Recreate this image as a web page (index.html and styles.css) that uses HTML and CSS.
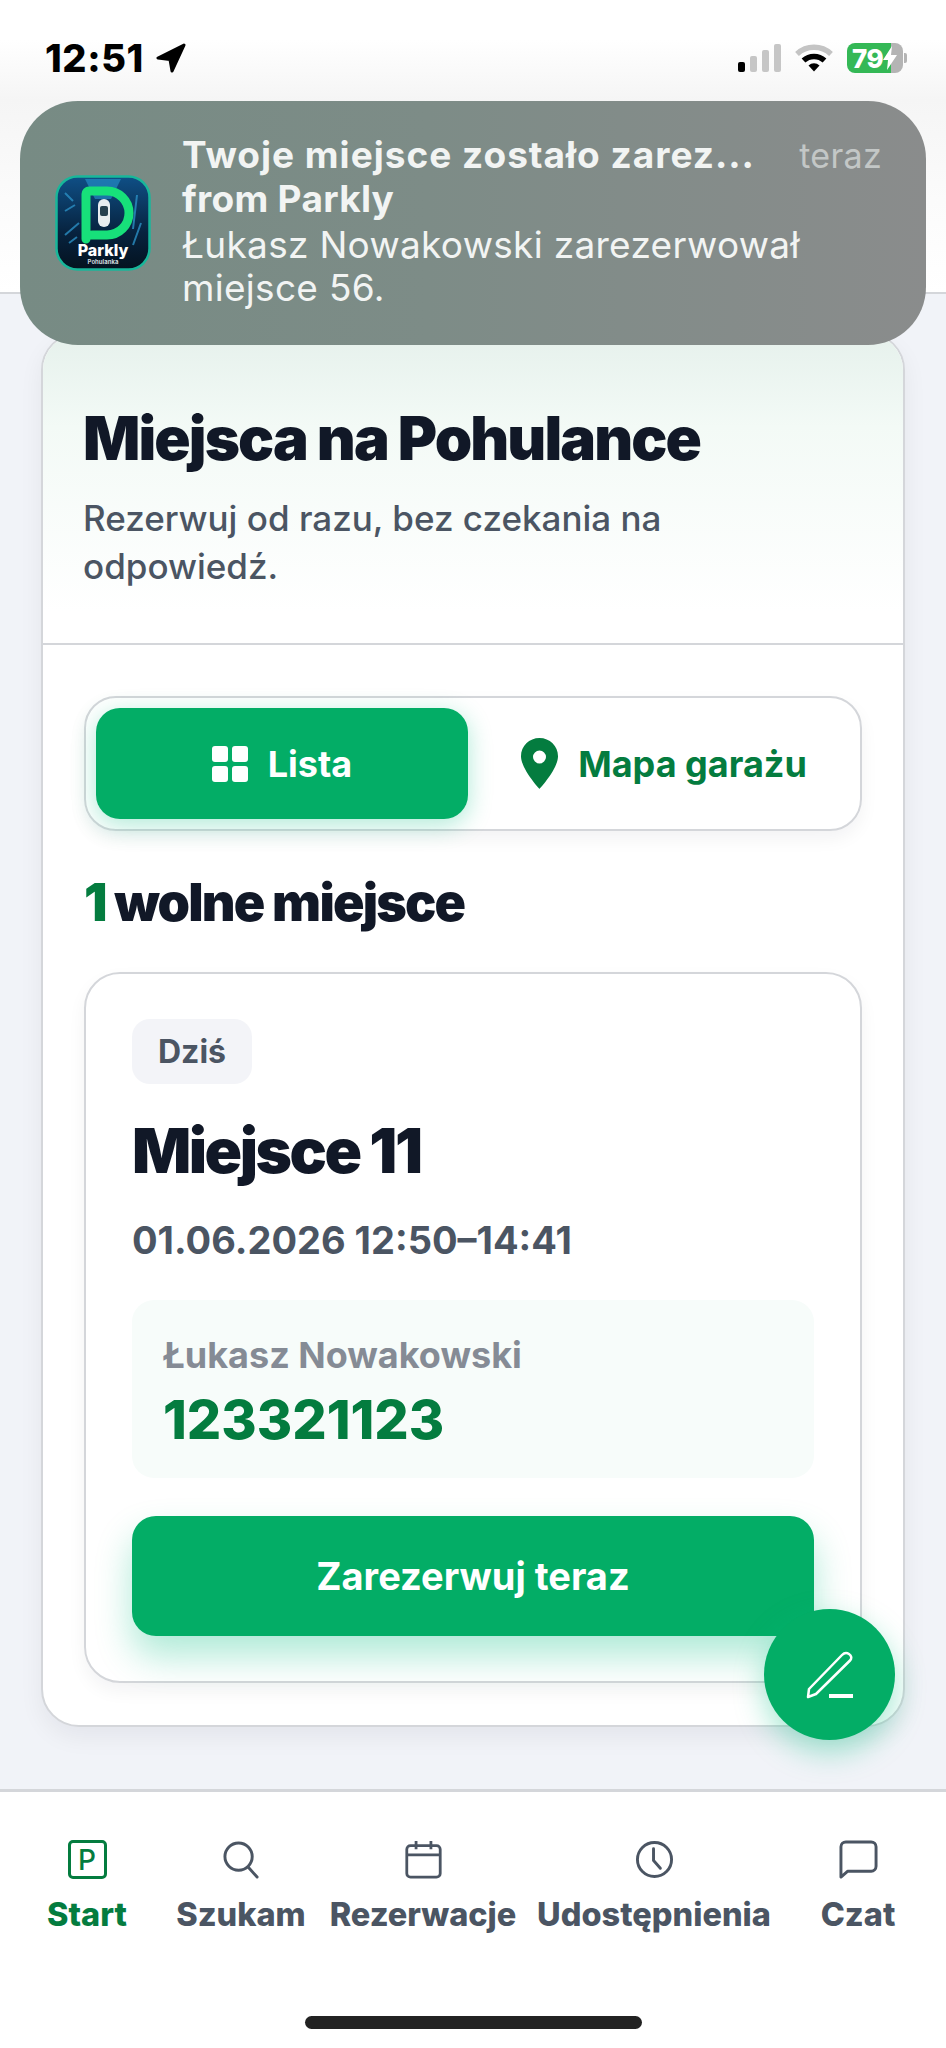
FILE: index.html
```html
<!DOCTYPE html>
<html lang="pl">
<head>
    <meta charset="UTF-8">
    <meta name="viewport" content="width=device-width, initial-scale=1.0">
    <title>Parkly</title>
    <link rel="stylesheet" href="styles.css">
</head>
<body>
    <div class="app">
        <header class="topbar">
            <div class="status">
                <div class="status-left">
                    <span class="clock">12:51</span>
                    <svg class="arrow" viewBox="0 0 30 30"><path d="M28 2 2 15l12 1.500L16 28z" fill="#000" stroke="#000" stroke-width="3" stroke-linejoin="round"/></svg>
                </div>
                <div class="status-right">
                    <div class="signal">
                        <span class="bar bar-1 on"></span>
                        <span class="bar bar-2"></span>
                        <span class="bar bar-3"></span>
                        <span class="bar bar-4"></span>
                    </div>
                    <svg class="wifi" viewBox="0 0 38 28">
                        <path d="M2 10a25 25 0 0 1 34 0" fill="none" stroke="#c4c4c4" stroke-width="5.5"/>
                        <path d="M8.5 16.5a15.500 15.500 0 0 1 21 0" fill="none" stroke="#000" stroke-width="5.500"/>
                        <path d="M13.500 21.500a8 8 0 0 1 11 0L19 27.500z" fill="#000"/>
                    </svg>
                    <div class="battery">
                        <div class="battery-body">
                            <span class="battery-level">79</span>
                            <svg class="bolt" viewBox="0 0 14 24"><path d="M9 0 0 14h5l-1 10 10-15H8z" fill="#fff"/></svg>
                        </div>
                        <span class="battery-nub"></span>
                    </div>
                </div>
            </div>
        </header>

        <div class="notification">
            <svg class="app-icon" viewBox="0 0 96 96">
                <defs>
                    <linearGradient id="iconBg" x1="0" y1="0" x2="0" y2="1">
                        <stop offset="0" stop-color="#0f4f86"/>
                        <stop offset="0.6" stop-color="#07233f"/>
                        <stop offset="1" stop-color="#04121f"/>
                    </linearGradient>
                </defs>
                <rect x="1.500" y="1.500" width="93" height="93" rx="21" fill="url(#iconBg)" stroke="#18b79a" stroke-width="2.500"/>
                <path d="M30 4h36L56 24H40z" fill="#2a9ed8" opacity="0.55"/>
                <path d="M10 18l8 8M10 36l10-6M82 20l-4 34M86 48l-8 22M10 60l14-12M14 68l8-6" stroke="#2b8fc4" stroke-width="2" opacity="0.8"/>
                <path d="M31 64V19a3 3 0 0 1 3-3h18a22 22 0 0 1 0 44H37" fill="none" stroke="#17e07a" stroke-width="9" stroke-linejoin="round" stroke-linecap="round"/>
                <rect x="43" y="24" width="12" height="28" rx="6" fill="#e8edf0"/>
                <rect x="45" y="31" width="8" height="10" rx="2" fill="#27404f"/>
                <text class="icon-name" x="48" y="81" text-anchor="middle">Parkly</text>
                <text class="icon-sub" x="48" y="89" text-anchor="middle">Pohulanka</text>
            </svg>
            <div class="notification-text">
                <div class="notification-head">
                    <span class="notification-title title-cut">Twoje miejsce zostało zarez...</span>
                    <span class="notification-time">teraz</span>
                </div>
                <div class="notification-title">from Parkly</div>
                <div class="notification-body">Łukasz Nowakowski zarezerwował<br>miejsce 56.</div>
            </div>
        </div>

        <main class="content">
            <section class="card">
                <div class="card-header">
                    <h1>Miejsca na Pohulance</h1>
                    <p>Rezerwuj od razu, bez czekania na odpowiedź.</p>
                </div>
                <div class="card-body">
                    <div class="toggle">
                        <button class="toggle-btn active">
                            <svg class="grid-icon" viewBox="0 0 36 36" fill="#fff">
                                <rect x="0" y="0" width="16" height="16" rx="3"/>
                                <rect x="20" y="0" width="16" height="16" rx="3"/>
                                <rect x="0" y="20" width="16" height="16" rx="3"/>
                                <rect x="20" y="20" width="16" height="16" rx="3"/>
                            </svg>
                            Lista
                        </button>
                        <button class="toggle-btn">
                            <svg class="pin-icon" viewBox="0 0 37 51"><path fill-rule="evenodd" d="M18.500 0C8.300 0 0 8.100 0 18.200 0 31 18.500 51 18.500 51S37 31 37 18.200C37 8.100 28.700 0 18.500 0zm0 12.500a6.500 6.500 0 1 1 0 13 6.500 6.500 0 0 1 0-13z" fill="#047c3f"/></svg>
                            Mapa garażu
                        </button>
                    </div>

                    <h2 class="count"><span class="count-num">1</span> wolne miejsce</h2>

                    <div class="slot">
                        <span class="badge">Dziś</span>
                        <h3>Miejsce 11</h3>
                        <div class="slot-date">01.06.2026 12:50–14:41</div>
                        <div class="contact">
                            <div class="contact-name">Łukasz Nowakowski</div>
                            <div class="contact-phone">123321123</div>
                        </div>
                        <button class="reserve">Zarezerwuj teraz</button>
                    </div>
                </div>
            </section>
            <button class="fab">
                <svg viewBox="0 0 48 48" fill="none" stroke="#fff" stroke-width="2.500" stroke-linejoin="round">
                    <path d="M2 46 3 38 36 4c2-2 4.500-2.500 7-1s3 4.500 1 6.500L10 43z"/>
                    <path d="M23 45h24" stroke-width="4"/>
                </svg>
            </button>
        </main>

        <nav class="tabs">
            <a class="tab current">
                <span class="parking-icon">P</span>
                <span class="tab-label">Start</span>
            </a>
            <a class="tab">
                <svg class="tab-icon" viewBox="0 0 40 40" fill="none" stroke="#4b5563" stroke-width="3"><circle cx="17" cy="17" r="14"/><path d="M27 28l9 10" stroke-linecap="round"/></svg>
                <span class="tab-label">Szukam</span>
            </a>
            <a class="tab">
                <svg class="tab-icon" viewBox="0 0 40 42" fill="none" stroke="#4b5563" stroke-width="3"><rect x="2" y="6" width="36" height="34" rx="4"/><path d="M2 16h36M12 1v9M28 1v9"/></svg>
                <span class="tab-label">Rezerwacje</span>
            </a>
            <a class="tab">
                <svg class="tab-icon" viewBox="0 0 40 40" fill="none" stroke="#4b5563" stroke-width="3" stroke-linecap="round"><circle cx="20" cy="20" r="17.500"/><path d="M19 9v12l7 8"/></svg>
                <span class="tab-label">Udostępnienia</span>
            </a>
            <a class="tab">
                <svg class="tab-icon" viewBox="0 0 40 40" fill="none" stroke="#4b5563" stroke-width="3" stroke-linejoin="round"><path d="M2 38V7a5 5 0 0 1 5-5h26a5 5 0 0 1 5 5v20a5 5 0 0 1-5 5H9z"/></svg>
                <span class="tab-label">Czat</span>
            </a>
            <div class="home-bar"></div>
        </nav>
    </div>
</body>
</html>
```

FILE: styles.css
```css
* {
    box-sizing: border-box;
}
body {
    margin: 0;
    font-family: 'Inter', sans-serif;
    color: #111827;
    background: #f1f3f8;
}
.app {
    position: relative;
    width: 946px;
    height: 2048px;
    display: flex;
    flex-direction: column;
    overflow: hidden;
}

/* top bar + status bar */
.topbar {
    height: 294px;
    padding-top: 43px;
    background: linear-gradient(#fff 0, #fff 40px, #f5f5f5 100px, #fbfbfb 200px, #fff 100%);
    border-bottom: 2px solid #d4d6da;
    flex-shrink: 0;
}
.status {
    display: flex;
    justify-content: space-between;
    align-items: center;
    height: 30px;
    padding: 0 39px 0 45px;
}
.status-left {
    display: flex;
    align-items: center;
    gap: 12px;
}
.clock {
    font-size: 38px;
    font-weight: 800;
    letter-spacing: 0.6px;
    color: #000;
}
.arrow {
    width: 30px;
    height: 30px;
}
.status-right {
    display: flex;
    align-items: center;
    gap: 14px;
}
.signal {
    display: flex;
    align-items: flex-end;
    gap: 5px;
    height: 28px;
}
.bar {
    width: 7px;
    background: #c6c6c6;
    border-radius: 2px;
}
.bar.on {
    background: #000;
}
.bar-1 { height: 10px; }
.bar-2 { height: 16px; }
.bar-3 { height: 22px; }
.bar-4 { height: 28px; }
.wifi {
    width: 38px;
    height: 28px;
}
.battery {
    display: flex;
    align-items: center;
    gap: 1px;
}
.battery-body {
    width: 56px;
    height: 30px;
    border-radius: 8px;
    background: linear-gradient(90deg, #34b856 78%, #b4b4b4 78%);
    display: flex;
    align-items: center;
    padding-left: 5px;
}
.battery-level {
    font-size: 26px;
    font-weight: 800;
    color: #fff;
    letter-spacing: -0.5px;
}
.bolt {
    width: 14px;
    height: 24px;
}
.battery-nub {
    width: 3px;
    height: 10px;
    background: #b4b4b4;
    border-radius: 0 2px 2px 0;
}

/* notification banner */
.notification {
    position: absolute;
    left: 20px;
    top: 101px;
    width: 906px;
    height: 244px;
    border-radius: 58px;
    background: linear-gradient(90deg, #778b84 0, #7d8c87 45%, #8a8c8c 100%);
    display: flex;
    align-items: center;
    padding: 0 44px 0 35px;
    gap: 31px;
    color: #f2f4f3;
    z-index: 2;
}
.app-icon {
    width: 96px;
    height: 96px;
    flex-shrink: 0;
}
.icon-name {
    font-family: 'Inter', sans-serif;
    font-size: 16px;
    font-weight: 800;
    fill: #fff;
}
.icon-sub {
    font-family: 'Inter', sans-serif;
    font-size: 6px;
    font-weight: 700;
    fill: #cfd8dc;
}
.notification-text {
    flex: 1;
    padding-bottom: 4px;
    font-size: 37px;
    line-height: 43px;
    letter-spacing: 0.3px;
}
.notification-head {
    display: flex;
    justify-content: space-between;
    align-items: baseline;
}
.notification-title {
    font-weight: 700;
}
.notification-body {
    margin-top: 3px;
}
.title-cut {
    letter-spacing: 1px;
    white-space: nowrap;
}
.notification-time {
    font-weight: 400;
    color: #c3c7c6;
    font-size: 34px;
}

/* main content */
.content {
    position: relative;
    flex: 1;
    padding: 38px 41px 0;
}
.card {
    background: #fff;
    border: 2px solid #d4d6da;
    border-radius: 38px;
    box-shadow: 0 10px 24px rgba(17, 24, 39, 0.06);
    overflow: hidden;
}
.card-header {
    height: 311px;
    padding: 70px 40px 0;
    background: linear-gradient(#e6f1ec 0, #f3faf6 30%, #fff 90%);
    border-bottom: 2px solid #d4d6da;
}
.card-header h1 {
    margin: 0;
    font-size: 60px;
    line-height: 68px;
    font-weight: 900;
    letter-spacing: -1.9px;
}
.card-header p {
    margin: 22px 0 0;
    font-size: 35px;
    line-height: 48px;
    font-weight: 500;
    color: #4b5563;
}
.card-body {
    padding: 51px 41px 42px;
}
.toggle {
    display: flex;
    gap: 10px;
    height: 135px;
    padding: 10px 10px 10px;
    border: 2px solid #d4d6da;
    border-radius: 32px;
    box-shadow: 0 8px 18px rgba(17, 24, 39, 0.05);
}
.toggle-btn {
    flex: 1;
    display: flex;
    align-items: center;
    justify-content: center;
    gap: 20px;
    border: none;
    background: none;
    font-family: inherit;
    font-size: 36px;
    font-weight: 700;
    color: #047c3f;
    border-radius: 24px;
}
.toggle-btn.active {
    background: #03ad66;
    color: #fff;
    box-shadow: 0 6px 24px rgba(5, 190, 130, 0.32);
}
.grid-icon {
    width: 36px;
    height: 36px;
}
.pin-icon {
    width: 37px;
    height: 51px;
}
.count {
    margin: 44px 0 41px;
    font-size: 52px;
    line-height: 56px;
    font-weight: 900;
    letter-spacing: -1.8px;
}
.count-num {
    color: #047c3f;
}
.slot {
    border: 2px solid #d4d6da;
    border-radius: 36px;
    padding: 45px 46px 45px;
    box-shadow: 0 8px 18px rgba(17, 24, 39, 0.05);
}
.badge {
    display: block;
    width: fit-content;
    height: 65px;
    padding: 0 26px;
    line-height: 65px;
    border-radius: 18px;
    background: #f3f4f8;
    font-size: 32px;
    font-weight: 700;
    color: #4b5563;
}
.slot h3 {
    margin: 32px 0 0;
    font-size: 62px;
    line-height: 70px;
    font-weight: 900;
    letter-spacing: -2.5px;
}
.slot-date {
    margin-top: 32px;
    font-size: 38px;
    line-height: 44px;
    font-weight: 700;
    color: #4b5563;
}
.contact {
    margin-top: 38px;
    height: 178px;
    padding: 33px 31px 0;
    border-radius: 22px;
    background: #f7fcfa;
}
.contact-name {
    font-size: 36px;
    line-height: 44px;
    font-weight: 700;
    color: #858b95;
}
.contact-phone {
    margin-top: 15px;
    font-size: 54px;
    line-height: 56px;
    font-weight: 800;
    color: #047c3f;
}
.reserve {
    display: block;
    width: 100%;
    height: 120px;
    margin-top: 38px;
    border: none;
    border-radius: 24px;
    background: #03ad66;
    color: #fff;
    font-family: inherit;
    font-size: 38px;
    font-weight: 700;
    box-shadow: 0 20px 36px rgba(5, 190, 130, 0.32);
}
.fab {
    position: absolute;
    left: 764px;
    bottom: 49px;
    width: 131px;
    height: 131px;
    padding: 0;
    border: none;
    border-radius: 50%;
    background: #03ad66;
    box-shadow: 0 12px 30px rgba(5, 190, 130, 0.36);
    display: flex;
    align-items: center;
    justify-content: center;
}
.fab svg {
    width: 48px;
    height: 48px;
}

/* bottom tabs */
.tabs {
    position: relative;
    flex-shrink: 0;
    height: 259px;
    padding: 48px 22px 0;
    background: #fff;
    border-top: 3px solid #d4d6da;
    display: grid;
    grid-template-columns: 130px 178px 186px 276px 132px;
    align-items: start;
}
.tab {
    display: flex;
    flex-direction: column;
    align-items: center;
    color: #4b5563;
}
.tab.current {
    color: #047c3f;
}
.tab-icon {
    width: 39px;
    height: 39px;
}
.parking-icon {
    width: 39px;
    height: 39px;
    border: 3px solid #047c3f;
    border-radius: 5px;
    display: flex;
    align-items: center;
    justify-content: center;
    font-size: 28px;
    font-weight: 500;
}
.tab-label {
    margin-top: 16px;
    font-size: 32.500px;
    line-height: 40px;
    font-weight: 800;
    white-space: nowrap;
}
.home-bar {
    position: absolute;
    left: 305px;
    bottom: 19px;
    width: 337px;
    height: 13px;
    border-radius: 7px;
    background: #222;
}
```
